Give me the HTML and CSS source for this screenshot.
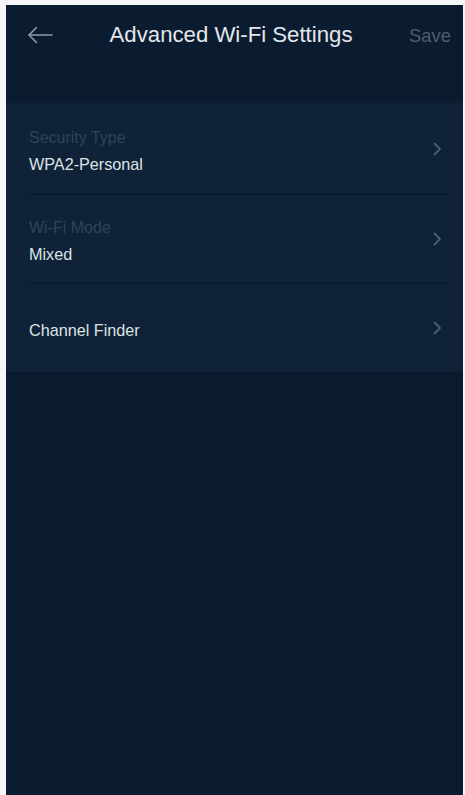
FILE: index.html
```html
<!DOCTYPE html>
<html lang="en">
<head>
<meta charset="utf-8">
<title>Advanced Wi-Fi Settings</title>
<link rel="stylesheet" href="styles.css">
</head>
<body>
<div class="screen">
  <header class="topbar">
    <span class="back" aria-label="Back">
      <svg width="26" height="18" viewBox="0 0 26 18" fill="none" stroke="#8d99a6" stroke-width="1.6" stroke-linecap="round" stroke-linejoin="round">
        <path d="M25 9H2"/>
        <path d="M9.5 1.5L2 9l7.5 7.5"/>
      </svg>
    </span>
    <h1 class="title">Advanced Wi-Fi Settings</h1>
    <span class="save">Save</span>
  </header>
  <ul class="list">
    <li class="row">
      <div class="text">
        <span class="label">Security Type</span>
        <span class="value">WPA2-Personal</span>
      </div>
      <svg class="chev" width="10" height="14" viewBox="0 0 10 14" fill="none" stroke="#4e5e70" stroke-width="1.8" stroke-linecap="round" stroke-linejoin="round"><path d="M2.5 1.5L8 7l-5.5 5.5"/></svg>
    </li>
    <li class="row">
      <div class="text">
        <span class="label">Wi-Fi Mode</span>
        <span class="value">Mixed</span>
      </div>
      <svg class="chev" width="10" height="14" viewBox="0 0 10 14" fill="none" stroke="#4e5e70" stroke-width="1.8" stroke-linecap="round" stroke-linejoin="round"><path d="M2.5 1.5L8 7l-5.5 5.5"/></svg>
    </li>
    <li class="row">
      <div class="text">
        <span class="value">Channel Finder</span>
      </div>
      <svg class="chev" width="10" height="14" viewBox="0 0 10 14" fill="none" stroke="#4e5e70" stroke-width="1.8" stroke-linecap="round" stroke-linejoin="round"><path d="M2.5 1.5L8 7l-5.5 5.5"/></svg>
    </li>
  </ul>
</div>
</body>
</html>
```
FILE: styles.css
```css
html, body {
  margin: 0;
  padding: 0;
  background: #f4f6f7;
}
body {
  font-family: "Liberation Sans", Arial, sans-serif;
  padding: 5px 2px 0 6px;
  height: 795px;
  box-sizing: border-box;
  overflow: hidden;
}
.screen {
  width: 457px;
  height: 790px;
  background: #0a1b2f;
  display: flex;
  flex-direction: column;
}
.topbar {
  height: 60px;
  background: #0b1c30;
  display: flex;
  align-items: center;
  padding: 0 12px 0 21px;
  margin-bottom: 38px;
  box-shadow: 0 38px 0 #0b1c30;
}
.back {
  display: flex;
  width: 30px;
}
.title {
  flex: 1;
  margin: 0;
  text-align: center;
  font-weight: normal;
  font-size: 22.2px;
  color: #e3e7eb;
  padding-right: 4px;
}
.save {
  font-size: 18.4px;
  color: #4f5d6c;
  padding-top: 2px;
}
.list {
  list-style: none;
  margin: 0;
  padding: 0;
  background: #0f2237;
  height: 269px;
  display: flex;
  flex-direction: column;
}
.row {
  flex: 1;
  display: flex;
  align-items: center;
  padding: 6px 21px 0 23px;
  position: relative;
}
.row + .row::before {
  content: "";
  position: absolute;
  left: 22px;
  right: 12px;
  top: 0;
  height: 2px;
  background: #0c1c2f;
}
.text {
  flex: 1;
  display: flex;
  flex-direction: column;
  gap: 6px;
}
.label {
  font-size: 16px;
  line-height: 20px;
  color: #2f4257;
}
.value {
  font-size: 16.2px;
  line-height: 20px;
  color: #dde2e7;
}
.chev {
  display: block;
  margin-top: -4px;
}
```
